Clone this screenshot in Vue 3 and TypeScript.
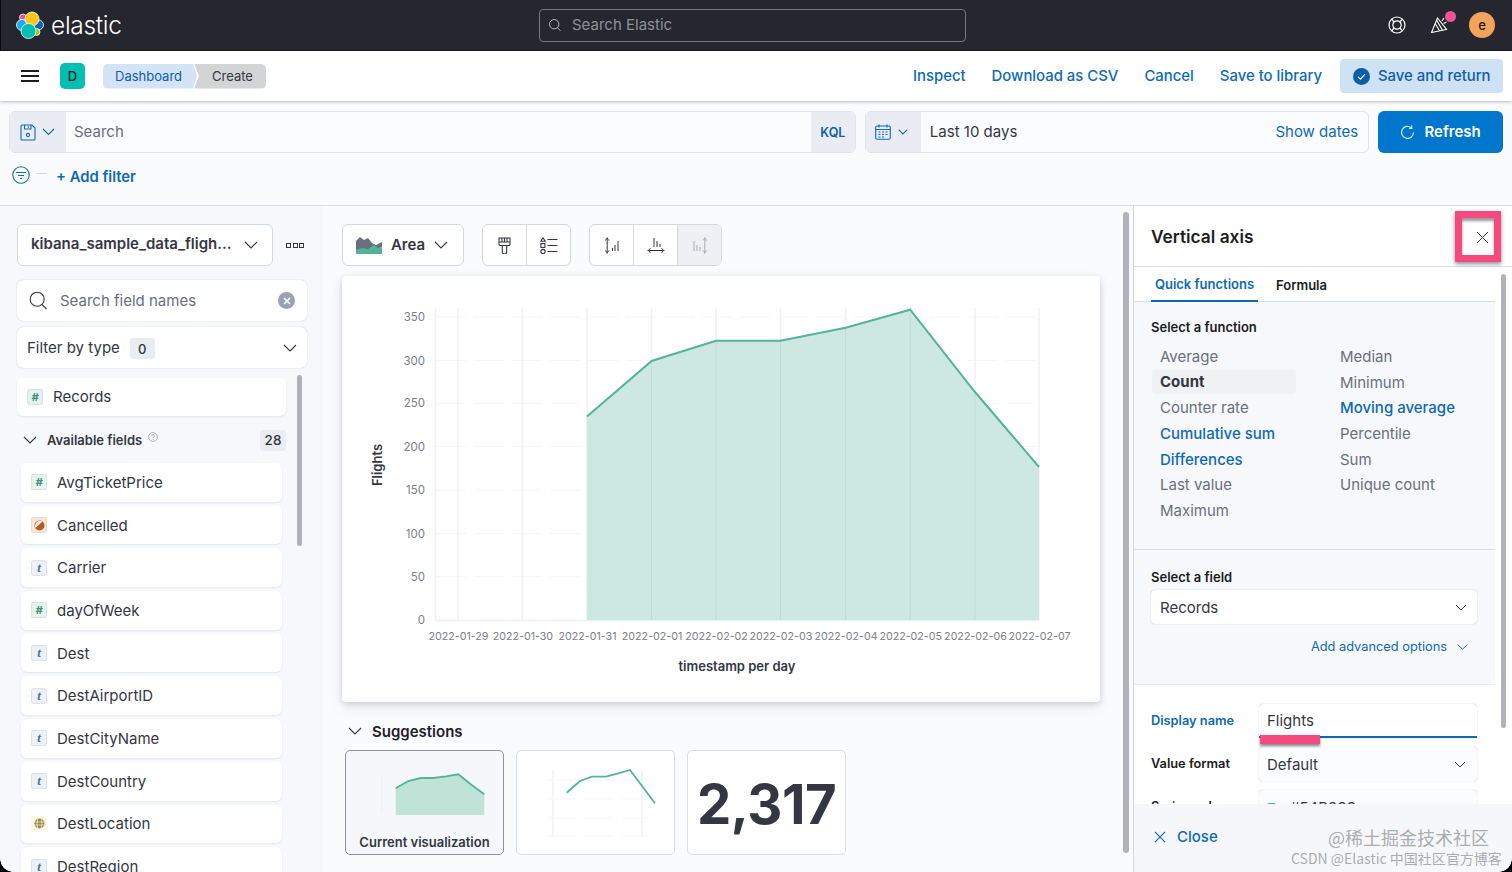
<script setup lang="ts">
type Token = 'num' | 'text' | 'bool' | 'geo'
interface Field { name: string; token: Token }

const fields: Field[] = [
  { name: 'AvgTicketPrice', token: 'num' },
  { name: 'Cancelled', token: 'bool' },
  { name: 'Carrier', token: 'text' },
  { name: 'dayOfWeek', token: 'num' },
  { name: 'Dest', token: 'text' },
  { name: 'DestAirportID', token: 'text' },
  { name: 'DestCityName', token: 'text' },
  { name: 'DestCountry', token: 'text' },
  { name: 'DestLocation', token: 'geo' },
  { name: 'DestRegion', token: 'text' },
]

const navLinks = ['Inspect', 'Download as CSV', 'Cancel', 'Save to library']

const leftFns = [
  { t: 'Average', k: 'muted' },
  { t: 'Count', k: 'active' },
  { t: 'Counter rate', k: 'muted' },
  { t: 'Cumulative sum', k: 'link' },
  { t: 'Differences', k: 'link' },
  { t: 'Last value', k: 'muted' },
  { t: 'Maximum', k: 'muted' },
]
const rightFns = [
  { t: 'Median', k: 'muted' },
  { t: 'Minimum', k: 'muted' },
  { t: 'Moving average', k: 'link' },
  { t: 'Percentile', k: 'muted' },
  { t: 'Sum', k: 'muted' },
  { t: 'Unique count', k: 'muted' },
]

// chart geometry, in card coordinates (card origin 342,276)
const xs = [116, 180.4, 245, 309.6, 374, 438.4, 503.6, 568.2, 633, 697]
const dates = ['2022-01-29', '2022-01-30', '2022-01-31', '2022-02-01', '2022-02-02', '2022-02-03', '2022-02-04', '2022-02-05', '2022-02-06', '2022-02-07']
const yTicks = [
  { v: '350', y: 41 }, { v: '300', y: 84.6 }, { v: '250', y: 127.3 }, { v: '200', y: 170.6 },
  { v: '150', y: 214 }, { v: '100', y: 257.6 }, { v: '50', y: 300.7 }, { v: '0', y: 344 },
]
const line = [
  [245, 140.5], [309.6, 85], [374, 64.7], [438.4, 64.7], [503.6, 51.7], [568.2, 33.7], [633, 116], [697, 191],
]
const toPts = (p: number[][]) => p.map((a) => a.join(',')).join(' ')
const linePts = toPts(line)
const areaPts = `245,344 ${linePts} 697,344`
const innerGrid = line.slice(1, -1)

const mini1 = [[50.7, 38.3], [63.3, 31], [76, 28], [88.3, 28], [101, 26.3], [113.3, 24.3], [126.7, 35], [139.3, 44.3]]
const mini1Pts = toPts(mini1)
const mini1Area = `50.7,65 ${mini1Pts} 139.3,65`
const mini2Pts = toPts([[50.7, 42.7], [64, 31], [75.7, 26.7], [90, 26.7], [102.3, 23.3], [114, 20], [139, 53.3]])
</script>

<template>
  <div class="screen">
    <header class="topbar">
      <div class="brand">
        <svg class="logo" width="28" height="28" viewBox="0 0 28 28">
          <circle cx="7" cy="6.500" r="3.500" fill="#f04e98" stroke="#fff" stroke-width=".8" />
          <circle cx="6" cy="14" r="5.500" fill="#1ba9f5" stroke="#fff" stroke-width=".8" />
          <circle cx="22.500" cy="14" r="5" fill="#0b64c4" stroke="#fff" stroke-width=".8" />
          <circle cx="20.500" cy="21" r="3.500" fill="#93c90e" stroke="#fff" stroke-width=".8" />
          <circle cx="16" cy="8" r="7" fill="#fec514" stroke="#fff" stroke-width=".8" />
          <circle cx="12.500" cy="20" r="7.500" fill="#00bfb3" stroke="#fff" stroke-width=".8" />
        </svg>
        <span class="brand-name">elastic</span>
      </div>
      <div class="global-search">
        <svg width="14" height="14" viewBox="0 0 14 14" fill="none" stroke="#b8bac0" stroke-width="1">
          <circle cx="6.200" cy="6.200" r="4.700" /><path d="M9.600 9.800 12.400 12.800" />
        </svg>
        <span>Search Elastic</span>
      </div>
      <div class="top-icons">
        <svg width="20" height="20" viewBox="0 0 20 20" fill="none" stroke="#fff" stroke-width="1.200">
          <circle cx="10" cy="10" r="8" /><circle cx="10" cy="10" r="4.200" />
          <path d="M4.500 4 7 6.900M15.500 4 13 6.900M4.500 16 7 13.100M15.500 16 13 13.100" />
        </svg>
        <span class="party">
          <svg width="20" height="20" viewBox="0 0 20 20" fill="none" stroke="#fff" stroke-width="1.100">
            <path d="M7.500 3 1.500 17.500 16.500 14.500Z" />
            <path d="M5.200 8.500 9.500 15.800M6.800 5.500 12.500 15.200M13.500 8.500l3-1.500M12 6l2-3" />
          </svg>
          <i class="dot"></i>
        </span>
        <span class="avatar">e</span>
      </div>
    </header>

    <nav class="navbar">
      <svg class="burger" width="18" height="12" viewBox="0 0 18 12" fill="none" stroke="#1a1c21" stroke-width="2">
        <path d="M0 1h18M0 6h18M0 11h18" />
      </svg>
      <span class="space-tile">D</span>
      <div class="crumbs">
        <span class="crumb crumb-a">Dashboard</span>
        <span class="crumb crumb-b">Create</span>
      </div>
      <div class="nav-links">
        <a v-for="l in navLinks" :key="l" class="nav-link">{{ l }}</a>
        <button class="save-btn">
          <svg width="17" height="17" viewBox="0 0 17 17">
            <circle cx="8.500" cy="8.500" r="8.500" fill="#0b5ea8" />
            <path d="M5 8.800 7.500 11.200 12 6.200" fill="none" stroke="#fff" stroke-width="1.100" />
          </svg>
          <span class="save-text">Save and return</span>
        </button>
      </div>
    </nav>

    <section class="querybar">
      <div class="query-row">
        <div class="query-group">
          <div class="prepend">
            <svg width="16" height="17" viewBox="0 0 16 17" fill="none" stroke="#0e6ab5" stroke-width="1.100">
              <path d="M1 2.200C1 1.500 1.500 1 2.200 1H12l3 3v11c0 .6-.5 1-1 1H2c-.6 0-1-.4-1-1Z" />
              <path d="M4.500 1v4h6.500V1M8.500 2.200v1.600" /><circle cx="8" cy="11" r="1.600" />
            </svg>
            <svg class="chev" width="13" height="8" viewBox="0 0 13 8" fill="none" stroke="#0e6ab5" stroke-width="1.100"><path d="M1 1l5.500 5.500L12 1" /></svg>
          </div>
          <div class="query-input">Search</div>
          <div class="kql">KQL</div>
        </div>
        <div class="date-group">
          <div class="prepend date-prepend">
            <svg width="16" height="16" viewBox="0 0 16 16" fill="none" stroke="#0e6ab5" stroke-width="1.100">
              <rect x=".7" y="2" width="14.600" height="13.300" rx="1.500" /><path d="M.7 5.500h14.600M4 .5v3M12 .5v3" />
              <path d="M3.500 8h2M7 8h2M10.500 8h2M3.500 10.500h2M7 10.500h2M10.500 10.500h2M3.500 13h2M7 13h2" />
            </svg>
            <svg width="10" height="6" viewBox="0 0 10 6" fill="none" stroke="#0e6ab5" stroke-width="1.100"><path d="M.7.7 5 5 9.300.7" /></svg>
          </div>
          <span class="date-text">Last 10 days</span>
          <a class="show-dates">Show dates</a>
        </div>
        <button class="refresh">
          <svg width="15" height="15" viewBox="0 0 15 15" fill="none" stroke="#cfe6f7" stroke-width="1.200">
            <path d="M11.500 2.900A6 6 0 1 0 13.500 7.500" /><path d="M11.800 .6v2.800H9" />
          </svg>
          <span class="refresh-text">Refresh</span>
        </button>
      </div>
      <div class="filter-row">
        <svg width="18" height="18" viewBox="0 0 18 18" fill="none" stroke="#0e6ab5" stroke-width="1.100">
          <circle cx="9" cy="9" r="8.200" /><path d="M4 6.500h10M6 9.500h6M8 12.500h2" />
        </svg>
        <i class="filter-dash"></i>
        <a class="add-filter">+ Add filter</a>
      </div>
    </section>

    <main class="main">
      <aside class="sidebar">
        <div class="index-row">
          <div class="index-btn">
            <span class="index-name">kibana_sample_data_fligh...</span>
            <svg width="14" height="8" viewBox="0 0 14 8" fill="none" stroke="#343741" stroke-width="1.100"><path d="M1 1l6 6 6-6" /></svg>
          </div>
          <span class="boxes"><i></i><i></i><i></i></span>
        </div>
        <div class="side-box search-box">
          <svg width="19" height="19" viewBox="0 0 19 19" fill="none" stroke="#343741" stroke-width="1.100">
            <circle cx="8.200" cy="8.200" r="7" /><path d="M13 13.500 17.500 18" />
          </svg>
          <span class="side-placeholder">Search field names</span>
          <span class="clear">
            <svg width="8" height="8" viewBox="0 0 8 8" stroke="#fff" stroke-width="1.600"><path d="M1 1l6 6M7 1 1 7" /></svg>
          </span>
        </div>
        <div class="side-box type-box">
          <span class="type-label">Filter by type</span>
          <span class="zero">0</span>
          <svg class="type-chev" width="14" height="8" viewBox="0 0 14 8" fill="none" stroke="#343741" stroke-width="1.100"><path d="M1 1l6 6 6-6" /></svg>
        </div>

        <div class="field-area">
          <div class="records">
            <span class="token token-num">#</span>
            <span class="field-name records-name">Records</span>
          </div>
          <div class="avail">
            <svg width="14" height="8" viewBox="0 0 14 8" fill="none" stroke="#343741" stroke-width="1.100"><path d="M1 1l6 6 6-6" /></svg>
            <span class="avail-title">Available fields</span>
            <svg class="help" width="10" height="10" viewBox="0 0 10 10" fill="none" stroke="#98a2b3" stroke-width=".8">
              <circle cx="5" cy="5" r="4.400" /><path d="M3.600 4c0-1.800 2.800-1.800 2.800 0 0 1-1.400 1-1.400 2M5 7v.8" />
            </svg>
            <span class="count">28</span>
          </div>
          <div class="field-list">
            <div v-for="f in fields" :key="f.name" class="field">
              <span v-if="f.token === 'num'" class="token token-num">#</span>
              <span v-else-if="f.token === 'text'" class="token token-text">t</span>
              <span v-else-if="f.token === 'bool'" class="token token-bool">
                <svg width="11" height="11" viewBox="0 0 11 11">
                  <circle cx="5.500" cy="5.500" r="5" fill="#a6602c" />
                  <path d="M1.500 8 A5 5 0 0 1 8.500 1.500 Z" fill="#fbe9dc" />
                </svg>
              </span>
              <span v-else class="token token-geo">
                <svg width="11" height="11" viewBox="0 0 11 11" fill="#8f8a4c">
                  <circle cx="5.500" cy="5.500" r="5" />
                  <path d="M.5 4h10M.5 7h10M4 .5c-1.200 3-1.200 7 0 10M7 .5c1.200 3 1.200 7 0 10" fill="none" stroke="#fbf7e5" stroke-width=".7" />
                </svg>
              </span>
              <span class="field-name">{{ f.name }}</span>
            </div>
          </div>
          <i class="side-scroll"></i>
        </div>
      </aside>

      <section class="workspace">
        <div class="toolbar">
          <div class="tool-btn area-btn">
            <svg width="26" height="17" viewBox="0 0 26 17">
              <path d="M0 17V4L4 0l4 3 4-2 4 5 4 2 6-3v11Z" fill="#69707d" />
              <path d="M0 17v-4l6-2 6 1 6-4 4 3 4-2v8Z" fill="#54b399" />
            </svg>
            <span class="area-label">Area</span>
            <svg width="14" height="8" viewBox="0 0 14 8" fill="none" stroke="#343741" stroke-width="1.100"><path d="M1 1l6 6 6-6" /></svg>
          </div>
          <div class="tool-group group-2">
            <div class="tool-cell">
              <svg width="13" height="17" viewBox="0 0 13 17" fill="none" stroke="#343741" stroke-width="1.100">
                <path d="M1 1h11v6.500a1 1 0 0 1-1 1H2a1 1 0 0 1-1-1ZM1 5h11M4 1v4M6.500 1v4M9 1v4M4.300 8.500V15a2.200 2 0 0 0 4.400 0V8.500" />
              </svg>
            </div>
            <div class="tool-cell">
              <svg width="18" height="17" viewBox="0 0 18 17" fill="none" stroke="#343741" stroke-width="1.100">
                <path d="M3 .8 5.200 4.200H.8ZM7.500 2.500H17.500M7.500 8.500H17.500M7.500 14.500H17.500" />
                <rect x=".9" y="6.600" width="4" height="3.800" /><circle cx="3" cy="14.500" r="2.100" />
              </svg>
            </div>
          </div>
          <div class="tool-group group-3">
            <div class="tool-cell">
              <svg width="16" height="17" viewBox="0 0 16 17" fill="none" stroke="#343741" stroke-width="1">
                <path d="M1 3.200C2.200 3 3 2 3.200.7 3.400 2 4.200 3 5.400 3.200M1 13.800C2.200 14 3 15 3.200 16.300 3.400 15 4.200 14 5.400 13.800M3.200 1V16M8.500 11v3M11 8v6M14 4v10" />
              </svg>
            </div>
            <div class="tool-cell">
              <svg width="18" height="17" viewBox="0 0 18 17" fill="none" stroke="#343741" stroke-width="1">
                <path d="M3.200 11.200C3 12.400 2 13.300.7 13.500 2 13.700 3 14.600 3.200 15.800M14.800 11.200C15 12.400 16 13.300 17.300 13.500 16 13.700 15 14.600 14.800 15.800M1 13.500H17M7 1v9M10 4v6M13 7v3" />
              </svg>
            </div>
            <div class="tool-cell cell-off">
              <svg width="16" height="17" viewBox="0 0 16 17" fill="none" stroke="#a6abb5" stroke-width="1">
                <path d="M10.600 3.200C11.800 3 12.600 2 12.800.7 13 2 13.800 3 15 3.200M10.600 13.800C11.800 14 12.600 15 12.800 16.300 13 15 13.800 14 15 13.800M12.800 1V16M2 4v10M5 8v6M8 10v4" />
              </svg>
            </div>
          </div>
        </div>

        <div class="chart-card">
          <svg class="chart" width="758" height="426" viewBox="0 0 758 426">
            <line v-for="t in yTicks" :key="'g' + t.v" x1="94" x2="697" :y1="t.y" :y2="t.y" class="grid-h" />
            <line x1="93.500" x2="93.500" y1="32" y2="344" class="grid-v" />
            <line v-for="x in xs" :key="'v' + x" :x1="x" :x2="x" y1="32" y2="344" class="grid-v" />
            <line x1="93" x2="697" y1="344.500" y2="344.500" class="grid-v" />
            <polygon :points="areaPts" class="area-fill" />
            <line v-for="p in innerGrid" :key="'o' + p[0]" :x1="p[0]" :x2="p[0]" :y1="p[1]" y2="344" class="grid-over" />
            <polyline :points="linePts" class="area-line" />
            <text v-for="t in yTicks" :key="'t' + t.v" x="83" :y="t.y + 4" text-anchor="end" class="tick">{{ t.v }}</text>
            <text v-for="(d, i) in dates" :key="d" :x="xs[i] + 0.5" y="364" text-anchor="middle" class="tick tick-date">{{ d }}</text>
            <text x="395" y="395" text-anchor="middle" class="axis-title">timestamp per day</text>
            <text transform="translate(40 189) rotate(-90)" text-anchor="middle" class="axis-title">Flights</text>
          </svg>
        </div>

        <div class="sugg-head">
          <svg width="14" height="8" viewBox="0 0 14 8" fill="none" stroke="#343741" stroke-width="1.100"><path d="M1 1l6 6 6-6" /></svg>
          <span>Suggestions</span>
        </div>
        <div class="sugg-row">
          <div class="sugg-card sugg-current">
            <svg width="159" height="72" viewBox="0 0 159 72" class="sugg-svg">
              <line x1="37" x2="37" y1="26" y2="62" class="grid-v" />
              <polygon :points="mini1Area" fill="#c0e3d8" />
              <polyline :points="mini1Pts" fill="none" stroke="#54b399" stroke-width="1.800" />
            </svg>
            <span class="sugg-label">Current visualization</span>
          </div>
          <div class="sugg-card">
            <svg width="159" height="90" viewBox="0 0 159 90" class="sugg-svg">
              <line x1="37" x2="37" y1="20" y2="86" class="grid-v" />
              <line x1="126" x2="126" y1="20" y2="86" class="grid-v" />
              <line x1="30" x2="133" y1="30" y2="30" class="grid-h" />
              <line x1="30" x2="133" y1="49" y2="49" class="grid-h" />
              <line x1="30" x2="133" y1="68" y2="68" class="grid-h" />
              <line x1="30" x2="133" y1="86" y2="86" class="grid-h" />
              <polyline :points="mini2Pts" fill="none" stroke="#54b399" stroke-width="1.800" />
            </svg>
          </div>
          <div class="sugg-card sugg-metric">2,317</div>
        </div>
        <i class="work-scroll"></i>
      </section>

      <aside class="panel">
        <div class="panel-head">Vertical axis</div>
        <div class="panel-scroll">
          <div class="panel-body">
            <div class="tabs">
              <span class="tab tab-on">Quick functions</span>
              <span class="tab">Formula</span>
            </div>
            <div class="fn-section">
              <div class="form-label">Select a function</div>
              <div class="fn-cols">
                <ul class="fn-list">
                  <li v-for="f in leftFns" :key="f.t" :class="['fn', 'fn-' + f.k]">{{ f.t }}</li>
                </ul>
                <ul class="fn-list">
                  <li v-for="f in rightFns" :key="f.t" :class="['fn', 'fn-' + f.k]">{{ f.t }}</li>
                </ul>
              </div>
            </div>
            <div class="field-section">
              <div class="form-label">Select a field</div>
              <div class="select">
                <span>Records</span>
                <svg width="12" height="7" viewBox="0 0 12 7" fill="none" stroke="#343741" stroke-width="1"><path d="M1 1l5 5 5-5" /></svg>
              </div>
              <div class="advanced">
                <a>Add advanced options</a>
                <svg width="11" height="6" viewBox="0 0 11 6" fill="none" stroke="#0e6ab5" stroke-width="1"><path d="M.7.7l4.800 4.500L10.300.7" /></svg>
              </div>
            </div>
            <div class="style-section">
              <div class="form-row">
                <label class="row-label row-label-on">Display name</label>
                <div class="input input-focus">Flights</div>
              </div>
              <div class="form-row">
                <label class="row-label">Value format</label>
                <div class="input select-like">
                  <span>Default</span>
                  <svg width="12" height="7" viewBox="0 0 12 7" fill="none" stroke="#343741" stroke-width="1"><path d="M1 1l5 5 5-5" /></svg>
                </div>
              </div>
              <div class="form-row">
                <label class="row-label">Series color</label>
                <div class="input color-input"><i class="swatch"></i><span>#54B399</span></div>
              </div>
            </div>
          </div>
          <i class="panel-bar"></i>
        </div>
        <div class="panel-foot">
          <svg width="12" height="12" viewBox="0 0 13 13" stroke="#0e6ab5" stroke-width="1.200"><path d="M1 1l11 11M12 1 1 12" /></svg>
          <a class="close-link">Close</a>
        </div>
      </aside>
    </main>

    <div class="highlight-close">
      <svg width="13" height="13" viewBox="0 0 13 13" stroke="#343741" stroke-width="1"><path d="M1 1l11 11M12 1 1 12" /></svg>
    </div>
    <i class="highlight-input"></i>
    <div class="mark mark-a">@稀土掘金技术社区</div>
    <div class="mark mark-b">CSDN @Elastic 中国社区官方博客</div>
    <i class="corner corner-l"></i>
    <i class="corner corner-r"></i>
  </div>
</template>

<style scoped>
* { box-sizing: border-box; }
.screen {
  position: relative;
  width: 1512px;
  height: 872px;
  overflow: hidden;
  display: flex;
  flex-direction: column;
  background: #fafbfd;
  color: #343741;
  font-family: Inter, "Noto Sans", "Noto Sans CJK SC", sans-serif;
  font-size: 15px;
}
a { color: #0e6ab5; }
i { display: block; }

/* top bar */
.topbar {
  height: 51px;
  flex: none;
  display: flex;
  align-items: center;
  background: #25262e;
  border-left: 1px solid #0b0b0f;
  border-bottom: 1px solid #17181d;
  padding: 0 17px 0 15px;
}
.brand { display: flex; align-items: center; gap: 7px; width: 523px; }
.brand-name { color: #fff; font-size: 24.500px; font-weight: 300; font-family: Inter, sans-serif; letter-spacing: -0.3px; }
.global-search {
  width: 427px;
  height: 33px;
  display: flex;
  align-items: center;
  gap: 10px;
  padding: 0 0 1px 8px;
  border: 1px solid #74767d;
  border-radius: 4px;
  color: #8f9198;
  font-size: 15px;
}
.top-icons { margin-left: auto; display: flex; align-items: center; gap: 23px; }
.party { position: relative; display: flex; margin-right: -4px; }
.dot { position: absolute; right: -6px; top: -4px; width: 11px; height: 11px; border-radius: 50%; background: #ef5497; }
.avatar {
  width: 26px; height: 26px; border-radius: 50%;
  background: #f5a35c; color: #1a1c21;
  display: flex; align-items: center; justify-content: center;
  font-size: 13px; font-weight: 500;
}

/* nav */
.navbar {
  height: 50px;
  flex: none;
  display: flex;
  align-items: center;
  background: #fff;
  padding: 0 9px 0 21px;
  box-shadow: 0 1px 3px rgba(0, 0, 0, .25);
  position: relative;
  z-index: 2;
}
.space-tile {
  width: 25px; height: 26px; margin-left: 21px;
  background: #00bfb3; border-radius: 5px;
  display: flex; align-items: center; justify-content: center;
  font-size: 13px; font-weight: 500; color: #1a1c21;
}
.crumbs { display: flex; margin-left: 18px; height: 25px; }
.crumb { display: flex; align-items: center; font-size: 13px; font-weight: 400; }
.crumb-a {
  width: 94px; padding-left: 12px; color: #0e5ea8; background: #d4e3f5;
  border-radius: 5px 0 0 5px;
  clip-path: polygon(0 0, 90px 0, 100% 50%, 90px 100%, 0 100%);
}
.crumb-b {
  width: 72px; margin-left: -3px; padding-left: 18px; color: #343741; background: #d3d4d6;
  border-radius: 0 5px 5px 0;
  clip-path: polygon(0 0, 100% 0, 100% 100%, 0 100%, 5px 50%);
}
.nav-links { margin-left: auto; display: flex; align-items: center; gap: 26px; }
.nav-link { font-size: 14.900px; font-weight: 500; color: #0e6ab5; }
.save-btn {
  width: 163px; height: 34px; margin-left: -8px;
  display: flex; align-items: center; gap: 8px; padding: 0 0 0 13px;
  background: #cfe1f4; border: 0; border-radius: 4px;
  color: #0e5ea8; font: 500 14.900px Inter, sans-serif;
}
.save-text { padding-bottom: 1px; }

/* query */
.querybar { height: 105px; flex: none; padding: 10px 9px 0; border-bottom: 1px solid #d8dde5; }
.query-row { display: flex; height: 42px; gap: 9px; }
.query-group, .date-group {
  display: flex; align-items: stretch;
  border: 1px solid #dfe3ea; border-radius: 6px; overflow: hidden;
  background: #fbfcfe;
}
.query-group { width: 848px; }
.date-group { width: 505px; }
.prepend { width: 56px; flex: none; display: flex; align-items: center; gap: 6px; padding-left: 10px; background: #e9edf3; }
.date-prepend { width: 55px; padding-left: 9px; gap: 7px; }
.query-input { flex: 1; display: flex; align-items: center; padding: 0 0 2px 8px; color: #69707d; font-size: 15px; }
.kql { width: 44px; display: flex; align-items: center; justify-content: center; background: #e9edf3; color: #0e5ea8; font-size: 12.500px; font-weight: 600; }
.date-text { display: flex; align-items: center; padding: 0 0 2px 9px; color: #343741; font-size: 15px; }
.show-dates { margin-left: auto; display: flex; align-items: center; padding: 0 10px 2px 0; font-size: 15px; }
.refresh {
  width: 125px; display: flex; align-items: center; justify-content: center; gap: 9px;
  background: #0077cc; border: 0; border-radius: 6px;
  color: #fff; font: 600 15px Inter, sans-serif;
}
.refresh-text { padding-bottom: 2px; }
.filter-row { display: flex; align-items: center; height: 45px; padding: 0 0 2px 3px; }
.filter-dash { width: 11px; height: 1px; margin: -3px 9px 0 6px; background: #d3dae6; }
.add-filter { font-size: 14.800px; font-weight: 600; margin-top: 5px; }

/* main */
.main { flex: 1; min-height: 0; display: flex; }

/* sidebar */
.sidebar { width: 323px; flex: none; padding: 18px 16px 0 17px; background: #f6f8fb; overflow: hidden; }
.index-row { display: flex; align-items: center; height: 42px; }
.index-btn {
  width: 256px; height: 42px; display: flex; align-items: center; justify-content: space-between;
  padding: 0 14px 0 13px; background: #fff; border: 1px solid #d3d8e1; border-radius: 6px;
}
.index-name { font-size: 15px; font-weight: 600; padding-bottom: 3px; white-space: nowrap; }
.boxes { display: flex; gap: 1.500px; margin-left: 13px; }
.boxes i { width: 5px; height: 5px; border: 1px solid #343741; }
.side-box { background: #fff; border-radius: 6px; box-shadow: 0 0 1px rgba(90, 100, 120, .5); display: flex; align-items: center; }
.search-box { height: 41px; margin-top: 14px; padding: 0 12px; }
.side-placeholder { margin-left: 12px; color: #69707d; font-size: 15px; }
.clear {
  margin-left: auto; width: 17px; height: 17px; border-radius: 50%; background: #98a2b3;
  display: flex; align-items: center; justify-content: center;
}
.type-box { height: 41px; margin-top: 6px; padding: 0 10px; }
.type-label { font-size: 15px; font-weight: 400; }
.zero {
  margin-left: 10px; width: 25px; height: 21px; margin-top: 2px; border-radius: 3px; background: #e9edf3;
  display: flex; align-items: center; justify-content: center; font-size: 13px; font-weight: 500;
}
.type-chev { margin-left: auto; }
.field-area { position: relative; margin-top: 10px; height: 600px; }
.records {
  width: 269px; height: 38px; display: flex; align-items: center; padding-left: 10px; gap: 10px;
  background: #fff; border-radius: 6px; box-shadow: 0 1px 2px rgba(90, 100, 120, .12);
}
.avail { width: 269px; height: 24px; margin-top: 12px; display: flex; align-items: center; padding-left: 6px; }
.avail-title { margin-left: 10px; font-size: 13px; font-weight: 600; }
.help { margin: -6px 0 0 6px; }
.count {
  margin-left: auto; width: 26px; height: 21px; border-radius: 3px; background: #e9edf3;
  display: flex; align-items: center; justify-content: center; font-size: 13.500px; font-weight: 500;
}
.field-list { margin: 11px 0 0 4px; width: 261px; display: flex; flex-direction: column; gap: 4px; }
.field {
  height: 38.700px; flex: none; display: flex; align-items: center; padding-left: 10px; gap: 10px;
  background: #fff; border-radius: 6px; box-shadow: 0 1px 2px rgba(90, 100, 120, .12);
}
.field-name { font-size: 15px; color: #343741; }
.records-name { padding-bottom: 2px; }
.token {
  width: 16px; height: 16px; flex: none; border-radius: 3px; display: flex; align-items: center; justify-content: center;
  font: italic 700 13px "Liberation Serif", serif;
}
.token-num { background: #e6f2ee; color: #3d8f78; box-shadow: inset 0 0 0 1px #d2e6df; font: italic 700 11px Inter, sans-serif; }
.token-text { background: #edf2f8; color: #4a7194; box-shadow: inset 0 0 0 1px #d8e3ee; }
.token-bool { background: #fae6d8; box-shadow: inset 0 0 0 1px #f5d8c3; }
.token-geo { background: #fbf7e5; }
.side-scroll { position: absolute; left: 280px; top: -3px; width: 5px; height: 171px; border-radius: 3px; background: #aeb2b8; }

/* workspace */
.workspace { position: relative; width: 811px; flex: none; padding: 18px 0 0 19px; background: #fafbfd; overflow: hidden; }
.toolbar { display: flex; gap: 18px; height: 42px; }
.tool-btn, .tool-group { background: #fff; border: 1px solid #d3d8e1; border-radius: 6px; }
.area-btn { width: 122px; display: flex; align-items: center; padding: 0 15px 0 13px; justify-content: space-between; }
.area-label { font-size: 15px; font-weight: 600; padding-bottom: 2px; }
.tool-group { display: flex; overflow: hidden; }
.group-2 { width: 89px; }
.group-3 { width: 133px; }
.tool-cell { flex: 1; display: flex; align-items: center; justify-content: center; border-left: 1px solid #d3d8e1; }
.tool-cell:first-child { border-left: 0; }
.cell-off { background: #eef0f4; }
.chart-card { width: 758px; height: 426px; margin-top: 10px; background: #fff; border-radius: 4px; box-shadow: 0 2px 6px rgba(70, 80, 100, .22), 0 6px 14px rgba(70, 80, 100, .08); }
.chart { display: block; }
.grid-h { stroke: #f5f6f8; stroke-width: 1; stroke-dasharray: 30 8; }
.grid-v { stroke: #f0f1f4; stroke-width: 1.500; }
.grid-over { stroke: #c0dbd3; stroke-width: 1; }
.area-fill { fill: #cde8e0; }
.area-line { fill: none; stroke: #54b399; stroke-width: 2; }
.tick { fill: #7b8088; font-size: 11.500px; font-family: Inter, sans-serif; }
.tick-date { font-size: 10.700px; }
.axis-title { fill: #343741; font-size: 13px; font-weight: 600; font-family: Inter, sans-serif; }
.sugg-head { height: 20px; margin-top: 19px; display: flex; align-items: center; gap: 10px; padding-left: 6px; font-size: 15px; font-weight: 600; color: #1f2127; }
.sugg-row { display: flex; gap: 12px; margin: 9px 0 0 3px; }
.sugg-card { position: relative; width: 159px; height: 105px; background: #fff; border: 1px solid #d9dde5; border-radius: 5px; overflow: hidden; }
.sugg-svg { position: absolute; left: -1px; top: -1px; }
.sugg-current { background: #f5f7fb; border-color: #8e929b; }
.sugg-label { position: absolute; left: 0; right: 0; top: 83px; text-align: center; font-size: 13px; font-weight: 600; color: #343741; }
.sugg-metric { display: flex; align-items: center; justify-content: center; font-size: 54.500px; font-weight: 700; letter-spacing: -0.5px; color: #343741; padding-top: 3px; }
.work-scroll { position: absolute; left: 800px; top: 6px; width: 6px; height: 641px; border-radius: 3px; background: #b0b4ba; }

/* panel */
.panel { width: 378px; flex: none; display: flex; flex-direction: column; background: #fff; box-shadow: -1px 0 0 #d3d8e1; position: relative; }
.panel-head { height: 61px; flex: none; padding: 20px 0 0 17px; font-size: 17.300px; font-weight: 600; color: #1a1c21; border-bottom: 1px solid #d8dde5; }
.panel-scroll { position: relative; flex: 1; min-height: 0; overflow: hidden; }
.panel-body { width: 361px; background: #fff; }
.tabs { height: 35px; display: flex; padding-left: 17px; gap: 18px; border-bottom: 1px solid #d8dde5; background: #fff; }
.tab { display: flex; align-items: center; padding-top: 1px; font-size: 13px; font-weight: 600; color: #1a1c21; height: 35px; }
.tab-on { width: 107px; justify-content: center; color: #0e6ab5; border-bottom: 2px solid #0e6ab5; }
.fn-section { height: 248px; padding: 16px 0 0 17px; background: #f7f8fb; border-bottom: 1px solid #d8dde5; }
.form-label { height: 18px; line-height: 18px; font-size: 13px; font-weight: 600; color: #1a1c21; }
.fn-cols { display: flex; margin: 8px 0 0 1px; }
.fn-list { list-style: none; margin: 0; padding: 0; width: 180px; flex: none; }
.fn { height: 25.700px; line-height: 25.700px; padding-left: 8px; font-size: 15px; width: 144px; }
.fn-muted { color: #69707d; }
.fn-link { color: #0e6ab5; font-weight: 500; width: 170px; }
.fn-active { color: #343741; font-weight: 700; background: #eff1f4; border-radius: 4px; height: 24px; line-height: 24px; margin-bottom: 1.700px; }
.field-section { height: 135px; padding: 18px 0 0 17px; background: #f7f8fb; border-bottom: 1px solid #e6e9ef; }
.select {
  width: 326px; height: 34px; margin-top: 4px; display: flex; align-items: center; justify-content: space-between;
  padding: 0 10px 0 9px; background: #fff; border-radius: 4px; box-shadow: 0 0 1px rgba(90, 100, 120, .6);
}
.advanced { width: 326px; margin-top: 15px; display: flex; align-items: center; justify-content: flex-end; gap: 10px; padding-right: 9px; font-size: 12.800px; }
.style-section { padding: 19px 0 0 17px; background: #fff; height: 140px; }
.form-row { display: flex; align-items: center; height: 34px; margin-bottom: 9px; }
.row-label { width: 108px; font-size: 12.800px; font-weight: 600; color: #1a1c21; padding-bottom: 2px; }
.row-label-on { color: #0e6ab5; }
.input {
  width: 218px; height: 34px; display: flex; align-items: center; padding: 0 9px 0 8px;
  background: #fbfcfe; border-radius: 4px; box-shadow: 0 0 1px rgba(90, 100, 120, .6); font-size: 15px;
}
.input-focus { background: #fff; border-bottom: 2px solid #0e6ab5; border-radius: 4px 4px 0 0; }
.select-like { justify-content: space-between; padding-right: 11px; }
.color-input { gap: 14px; }
.swatch { width: 9px; height: 9px; background: #54b399; border-radius: 2px; }
.panel-bar { position: absolute; left: 367px; top: 7px; width: 5px; height: 454px; border-radius: 3px; background: #b0b4ba; }
.panel-foot { height: 68px; flex: none; display: flex; align-items: center; gap: 11px; padding: 0 0 2px 20px; background: #f5f7fa; }
.close-link { font-size: 15px; font-weight: 500; margin-top: -1px; }

/* overlays */
.highlight-close {
  position: absolute; left: 1455px; top: 211px; width: 46px; height: 51px;
  display: flex; align-items: center; justify-content: center; padding-left: 8px; padding-top: 2px;
  background: #fff; border: 7px solid #f5497f; z-index: 3;
  box-shadow: 0 2px 4px rgba(0, 0, 0, .45), inset 0 3px 3px rgba(0, 0, 0, .4);
}
.highlight-input {
  position: absolute; left: 1260px; top: 735px; width: 60px; height: 9px;
  background: #f5497f; box-shadow: 0 2px 3px rgba(0, 0, 0, .5); z-index: 3;
}
.mark { position: absolute; z-index: 4; white-space: nowrap; color: rgba(120, 122, 128, .62); font-family: "Noto Sans CJK SC", sans-serif; }
.mark-a { left: 1328px; top: 824px; font-size: 18px; line-height: 26px; }
.mark-b { left: 1291px; top: 848px; font-size: 14px; line-height: 20px; }
.corner { position: absolute; bottom: 0; width: 13px; height: 13px; z-index: 5; }
.corner-l { left: 0; background: radial-gradient(circle at 100% 0, transparent 12.500px, #000 13px); }
.corner-r { right: 0; background: radial-gradient(circle at 0 0, transparent 12.500px, #000 13px); }
</style>

<style>
html, body { overflow: hidden; background: #fff; }
</style>
